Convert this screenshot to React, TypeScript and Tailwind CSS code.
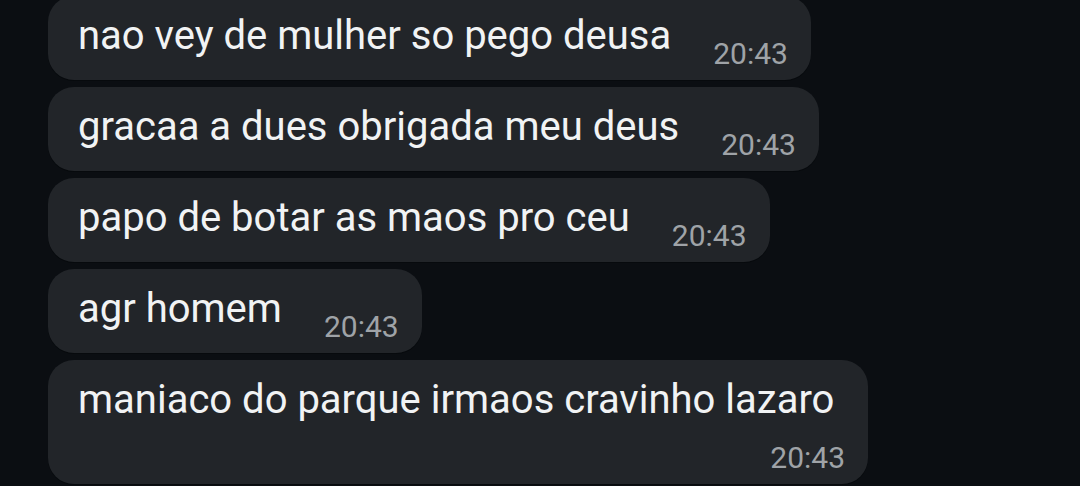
const messages = [
  "nao vey de mulher so pego deusa",
  "gracaa a dues obrigada meu deus",
  "papo de botar as maos pro ceu",
  "agr homem",
  "maniaco do parque irmaos cravinho lazaro",
];

function Bubble({ text, time }: { text: string; time: string }) {
  return (
    <div className="w-fit max-w-[820px] rounded-[26px] bg-[#222529] pl-[30px] pr-[23px] pt-[16px] pb-[9px] shadow-[0_1px_0_#070a0d]">
      <div className="flex flex-wrap items-end gap-x-[42px]">
        <span className="mb-[11px] text-[40px] leading-[48px] text-[#f1f3f4]">{text}</span>
        <span className="ml-auto mt-[6px] text-[30px] leading-[34px] text-[#9fa3a7]">{time}</span>
      </div>
    </div>
  );
}

export default function App() {
  return (
    <div
      className="h-[486px] w-[1080px] overflow-hidden bg-[#0b0e12]"
      style={{ fontFamily: "Roboto, 'Noto Sans', sans-serif" }}
    >
      <div className="-mt-[4px] flex flex-col gap-[7px] pl-[48px]">
        {messages.map((m, i) => (
          <Bubble key={i} text={m} time="20:43" />
        ))}
      </div>
    </div>
  );
}
